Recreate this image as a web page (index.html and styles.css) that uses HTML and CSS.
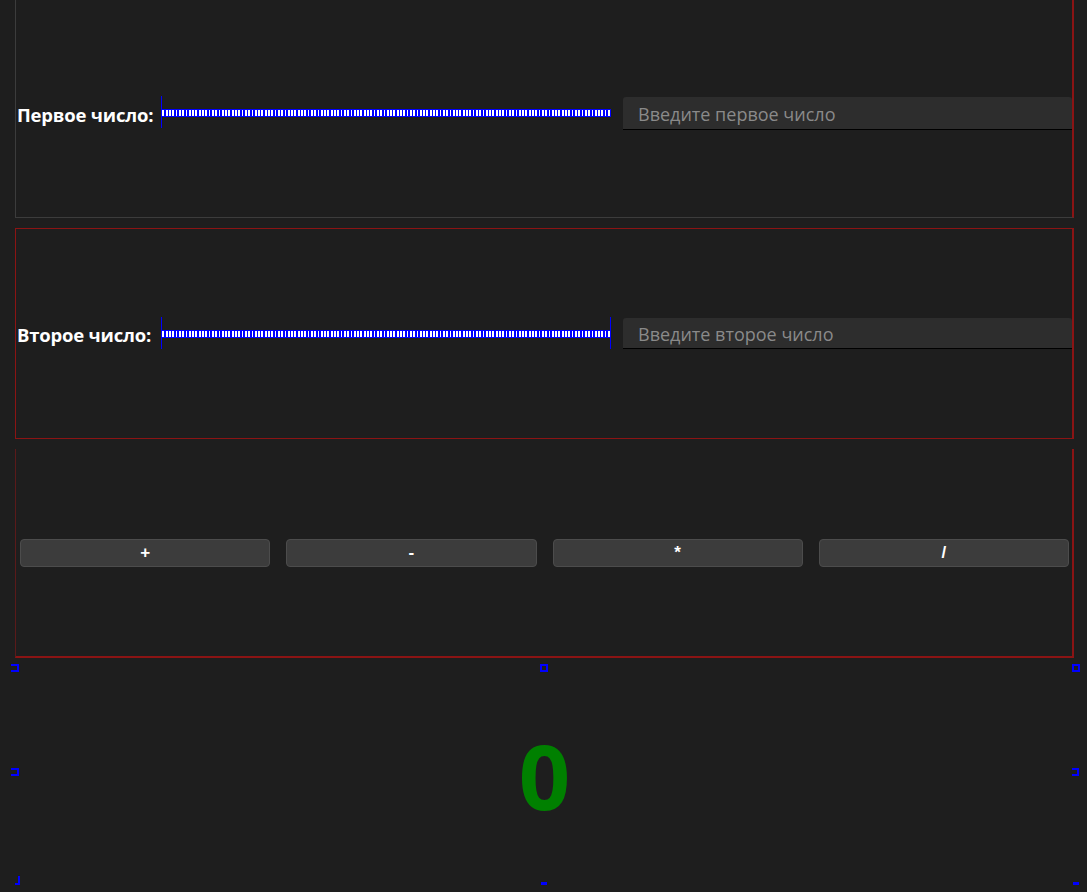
FILE: index.html
```html
<!DOCTYPE html>
<html lang="ru">
<head>
<meta charset="utf-8">
<title>Калькулятор</title>
<link rel="stylesheet" href="styles.css">
</head>
<body>
<div class="page">
  <section class="panel panel-first">
    <div class="row">
      <label class="label" for="a">Первое число:</label>
      <div class="ruler ruler-start"></div>
      <input id="a" class="field" type="text" placeholder="Введите первое число">
    </div>
  </section>
  <section class="panel panel-second">
    <div class="row">
      <label class="label" for="b">Второе число:</label>
      <div class="ruler ruler-start ruler-end"></div>
      <input id="b" class="field" type="text" placeholder="Введите второе число">
    </div>
  </section>
  <section class="panel panel-ops">
    <div class="ops">
      <button class="op">+</button>
      <button class="op">-</button>
      <button class="op">*</button>
      <button class="op">/</button>
    </div>
  </section>
  <section class="result">
    <span class="mark m-tl"></span>
    <span class="mark m-tc"></span>
    <span class="mark m-tr"></span>
    <span class="mark m-ml"></span>
    <span class="mark m-mr"></span>
    <span class="mark m-bl"></span>
    <span class="mark m-bc"></span>
    <span class="mark m-br"></span>
    <div class="value">0</div>
  </section>
</div>
</body>
</html>
```

FILE: styles.css
```css
html, body {
  margin: 0;
  padding: 0;
  background: #1e1e1e;
  height: 100%;
  overflow: hidden;
}

.page {
  display: flex;
  flex-direction: column;
  gap: 10px;
  padding: 0 13px 0 15px;
  font-family: "Open Sans", "Noto Sans", sans-serif;
}

.panel {
  box-sizing: border-box;
  display: flex;
  align-items: center;
}

.panel-first {
  height: 218px;
  border-left: 1px solid #3c3c3c;
  border-right: 2px solid #8b1414;
  border-bottom: 1px solid #3c3c3c;
}

.panel-first .row {
  margin-top: 9px;
}

.panel-second {
  height: 211px;
  border: 1px solid #8b1414;
  border-right-width: 2px;
}

.panel-ops {
  height: 209px;
  border-left: 1px solid #5a1a1a;
  border-right: 2px solid #8b1414;
  border-bottom: 2px solid #8b1414;
}

.row {
  display: flex;
  align-items: center;
  width: 100%;
  padding-left: 1px;
}

.label {
  color: #ffffff;
  font-weight: 700;
  font-size: 18.5px;
  letter-spacing: -0.2px;
  white-space: nowrap;
  margin-right: 8px;
  padding-top: 2px;
}

.panel-second .label {
  margin-right: 10px;
}

.ruler {
  flex: 1;
  height: 6px;
  margin-right: 12px;
  background: repeating-linear-gradient(90deg, #0000ff 0 1.5px, #ffffff 1.5px 3.3px);
  border-top: 1px solid #0000ff;
  border-bottom: 1px solid #0000ff;
  position: relative;
}

.ruler-start::before,
.ruler-end::after {
  content: "";
  position: absolute;
  top: -14px;
  width: 1px;
  height: 32px;
  background: #0000ff;
}

.ruler-start::before { left: 0; }
.ruler-end::after { right: 0; }

.field {
  box-sizing: border-box;
  width: 449px;
  height: 33px;
  margin: 0;
  padding: 3px 15px 0;
  border: none;
  border-bottom: 1px solid #000000;
  border-radius: 3px 3px 0 0;
  background: #2d2d2d;
  color: #ffffff;
  font-family: "Open Sans", "Noto Sans", sans-serif;
  font-size: 18px;
  outline: none;
}

.panel-second .field {
  height: 31px;
  padding-top: 2px;
}

.field::placeholder {
  color: #8a8a8a;
}

.ops {
  display: grid;
  grid-template-columns: repeat(4, 1fr);
  gap: 16px;
  width: 100%;
  padding: 0 3px 0 4px;
  margin-top: 0;
}

.op {
  height: 28px;
  background: #3c3c3c;
  border: 1px solid #4c4c4c;
  border-radius: 4px;
  color: #ffffff;
  font-family: "Liberation Sans", Arial, sans-serif;
  font-weight: 700;
  font-size: 17px;
  padding: 0;
}

.result {
  position: relative;
  height: 221px;
  margin: -4px -8px 0 -4px;
  display: flex;
  align-items: center;
  justify-content: center;
}

.value {
  color: #008000;
  font-family: "Open Sans", "Noto Sans", sans-serif;
  font-weight: 700;
  font-size: 90px;
  line-height: 1;
  margin-top: 0;
  margin-left: -4px;
}

.mark {
  position: absolute;
  box-sizing: border-box;
  width: 8px;
  height: 8px;
  border: 2px solid #0000ff;
}

.m-tl { left: 0; top: 0; border-left: none; }
.m-tc { left: 529px; top: 0; }
.m-tr { left: 1061px; top: 0; }
.m-ml { left: 0; top: 104px; border-left: none; }
.m-mr { left: 1061px; top: 104px; border-left: none; width: 7px; }
.m-bl { left: 4px; top: 212px; width: 5px; height: 9px; border-left: none; border-top: none; }
.m-bc { left: 530px; top: 218px; width: 6px; height: 3px; border: none; background: #0000ff; }
.m-br { left: 1062px; top: 218px; width: 6px; height: 3px; border: none; background: #0000ff; }
```
